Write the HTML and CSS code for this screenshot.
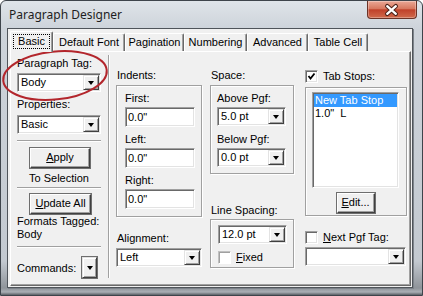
FILE: index.html
```html
<!DOCTYPE html>
<html lang="en">
  <head>
    <meta charset="UTF-8">
    <title>Paragraph Designer</title>
    <link rel="stylesheet" href="styles.css">
  </head>
  <body>
    <div class="window">
      <div class="titlebar">
        <span class="title">Paragraph Designer</span>
        <div class="close-btn">
          <svg width="50" height="18" viewBox="0 0 50 18">
            <path d="M20 5 L29 13 M29 5 L20 13" stroke="#4b2219" stroke-width="4.5" stroke-linecap="round"/>
            <path d="M20 5 L29 13 M29 5 L20 13" stroke="#fff" stroke-width="2.4" stroke-linecap="round"/>
          </svg>
        </div>
      </div>

      <div class="client">
        <div class="tabs">
          <div class="tab active tab-basic"><span class="focus">Basic</span></div>
          <div class="tab tab-font">Default Font</div>
          <div class="tab tab-pagination">Pagination</div>
          <div class="tab tab-numbering">Numbering</div>
          <div class="tab tab-advanced">Advanced</div>
          <div class="tab tab-cell">Table Cell</div>
        </div>

        <div class="panel">
          <!-- tag / properties / commands -->
          <div class="col-left">
            <div class="label">Paragraph Tag:</div>
            <div class="combo tag-combo"><span class="value">Body</span><span class="arrow"></span></div>
            <div class="label props-label">Properties:</div>
            <div class="combo props-combo"><span class="value">Basic</span><span class="arrow"></span></div>
            <div class="hsep sep-1"></div>
            <div class="button apply-btn"><u>A</u>pply</div>
            <div class="label center to-sel">To Selection</div>
            <div class="hsep sep-2"></div>
            <div class="button update-btn"><u>U</u>pdate All</div>
            <div class="label tight tagged">Formats Tagged:</div>
            <div class="label tight">Body</div>
            <div class="hsep sep-3"></div>
            <div class="commands">
              <span>Commands:</span>
              <span class="arrow-btn"></span>
            </div>
          </div>

          <div class="vsep"></div>

          <!-- indents + alignment -->
          <div class="col-indents">
            <div class="label caption">Indents:</div>
            <div class="group indents-box">
              <div class="label">First:</div>
              <div class="field">0.0"</div>
              <div class="label next">Left:</div>
              <div class="field">0.0"</div>
              <div class="label next">Right:</div>
              <div class="field">0.0"</div>
            </div>
            <div class="label caption align-label">Alignment:</div>
            <div class="combo align-combo"><span class="value">Left</span><span class="arrow"></span></div>
          </div>

          <!-- space + line spacing -->
          <div class="col-space">
            <div class="label caption">Space:</div>
            <div class="group space-box">
              <div class="label">Above Pgf:</div>
              <div class="combo"><span class="value">5.0 pt</span><span class="arrow"></span></div>
              <div class="label next-sel">Below Pgf:</div>
              <div class="combo"><span class="value">0.0 pt</span><span class="arrow"></span></div>
            </div>
            <div class="label caption linesp-label">Line Spacing:</div>
            <div class="group linesp-box">
              <div class="combo"><span class="value">12.0 pt</span><span class="arrow"></span></div>
              <div class="check-row fixed-row">
                <span class="checkbox"></span>
                <span><u>F</u>ixed</span>
              </div>
            </div>
          </div>

          <!-- tab stops + next tag -->
          <div class="col-tabs">
            <div class="check-row">
              <span class="checkbox">
                <svg width="9" height="9" viewBox="0 0 9 9"><polyline points="1.5,4 3.5,6.5 7.5,1.5" fill="none" stroke="#000" stroke-width="1.8"/></svg>
              </span>
              <span>Tab Stops:</span>
            </div>
            <div class="group tabs-box">
              <div class="listbox">
                <div class="item selected">New Tab Stop</div>
                <div class="item">1.0"&nbsp;&nbsp;L</div>
              </div>
              <div class="button edit-btn"><u>E</u>dit...</div>
            </div>
            <div class="check-row next-row">
              <span class="checkbox"></span>
              <span><u>N</u>ext Pgf Tag:</span>
            </div>
            <div class="combo next-combo"><span class="value"></span><span class="arrow"></span></div>
          </div>
        </div>
      </div>
    </div>

    <svg class="annotation" width="423" height="296" viewBox="0 0 423 296">
      <ellipse cx="55" cy="75.5" rx="52" ry="24" transform="rotate(-6 55 75.5)" fill="none" stroke="#b3262c" stroke-width="2"/>
    </svg>
  </body>
</html>
```

FILE: styles.css
```css
body {
  margin: 0;
  background: #fff;
  font-family: "Liberation Sans", Arial, sans-serif;
  font-size: 11px;
  color: #000;
}
.window {
  width: 423px;
  height: 296px;
  box-sizing: border-box;
  border: 1px solid #3e444b;
  border-radius: 6px 6px 0 0;
  background: linear-gradient(#dfe4e9, #cdd3da 28px, #c3c9d0 260px, #8f949a 287px, #a9aeb4 291px, #5b6066);
  display: flex;
  flex-direction: column;
}
.titlebar {
  height: 27px;
  display: flex;
  align-items: flex-start;
  padding-left: 8px;
}
.title {
  font-family: "Noto Sans", sans-serif;
  font-size: 12px;
  line-height: 28px;
  color: #1e1e1e;
}
.close-btn {
  margin-left: auto;
  margin-right: 5px;
  width: 50px;
  height: 18px;
  box-sizing: border-box;
  border: 1px solid #6b3327;
  border-top: none;
  border-radius: 0 0 4px 4px;
  background: linear-gradient(#eaa896, #d7785f 45%, #c0412a 52%, #d06a4c);
  box-shadow: inset 0 0 0 1px rgba(255, 255, 255, 0.3);
  display: flex;
  justify-content: center;
  align-items: center;
}
.close-btn svg {
  display: block;
}

.client {
  flex: 1;
  margin: 0 9px 7px 6px;
  border: 1px solid #4f545a;
  box-shadow: 1px 1px 0 #7d838a;
  background: #f0f0f0;
  padding: 2px 1px 1px 2px;
  display: flex;
  flex-direction: column;
}

/* tabs */
.tabs {
  height: 20px;
  display: flex;
  align-items: flex-end;
}
.tab {
  height: 18px;
  box-sizing: border-box;
  border: 1px solid #fff;
  border-right-color: #696969;
  border-bottom: none;
  border-radius: 2px 2px 0 0;
  box-shadow: inset -1px 0 #a0a0a0;
  text-align: center;
  line-height: 17px;
}
.tab.active {
  height: 21px;
  margin-bottom: -1px;
  background: #f0f0f0;
  position: relative;
  z-index: 1;
  line-height: 18px;
}
.focus {
  display: inline-block;
  outline: 1px dotted #000;
  padding: 0 4px;
  line-height: 13px;
  margin-top: 2px;
}
.tab-basic { width: 43px; }
.tab-font { width: 72px; }
.tab-pagination { width: 59px; }
.tab-numbering { width: 63px; }
.tab-advanced { width: 61px; }
.tab-cell { width: 60px; }

.panel {
  flex: 1;
  border: 1px solid #fff;
  border-right-color: #696969;
  border-bottom-color: #696969;
  box-shadow: inset -1px -1px #a0a0a0;
  padding: 4px 3px 7px 6px;
  display: flex;
}

/* common controls */
.label {
  line-height: 14px;
  white-space: nowrap;
}
.label.center {
  text-align: center;
}
.label.tight {
  line-height: 13px;
}
.combo,
.field {
  height: 19px;
  box-sizing: border-box;
  border: 1px solid;
  border-color: #a0a0a0 #fff #fff #a0a0a0;
  box-shadow: inset 1px 1px #696969, inset -1px -1px #e3e3e3;
  background: #fff;
}
.combo {
  display: flex;
  padding: 1px;
}
.combo .value {
  flex: 1;
  padding-left: 2px;
  line-height: 15px;
}
.field {
  height: 20px;
  padding-left: 2px;
  line-height: 18px;
}
.arrow,
.arrow-btn {
  width: 16px;
  box-sizing: border-box;
  border: 1px solid;
  border-color: #e3e3e3 #404040 #404040 #e3e3e3;
  box-shadow: inset 1px 1px #fff, inset -1px -1px #a0a0a0;
  background: #f0f0f0;
  display: flex;
  justify-content: center;
  align-items: center;
}
.arrow::after,
.arrow-btn::after {
  content: "";
  border-top: 4px solid #000;
  border-left: 3.5px solid transparent;
  border-right: 3.5px solid transparent;
}
.button {
  height: 20px;
  box-sizing: border-box;
  border: 1px solid;
  border-color: #fff #404040 #404040 #fff;
  box-shadow: inset -1px -1px #a0a0a0, 0 0 0 1px #6e6e6e;
  text-align: center;
  line-height: 17px;
}
.hsep {
  border-top: 1px solid #a0a0a0;
  border-bottom: 1px solid #fff;
}
.group {
  border: 1px solid #a0a0a0;
  box-shadow: inset 1px 1px #fff, 1px 1px #fff;
}
.checkbox {
  width: 13px;
  height: 13px;
  box-sizing: border-box;
  border: 1px solid;
  border-color: #a0a0a0 #fff #fff #a0a0a0;
  box-shadow: inset 1px 1px #696969, inset -1px -1px #e3e3e3;
  background: #fff;
  display: flex;
  justify-content: center;
  align-items: center;
}
.check-row {
  display: flex;
  align-items: center;
  gap: 5px;
  height: 14px;
}

/* left column */
.col-left {
  width: 84px;
  display: flex;
  flex-direction: column;
}
.tag-combo { margin-top: 3px; }
.props-label { margin-top: 5px; }
.props-combo { margin-top: 4px; }
.sep-1 { margin-top: 6px; }
.apply-btn {
  margin: 6px 11px 0 13px;
}
.to-sel { margin-top: 3px; }
.sep-2 { margin-top: 2px; }
.update-btn {
  margin: 5px 10px 0 13px;
}
.tagged { margin-top: 1px; }
.sep-3 { margin-top: 5px; }
.commands {
  margin-top: 9px;
  display: flex;
  align-items: center;
  justify-content: flex-end;
  gap: 6px;
  padding-right: 4px;
}
.arrow-btn {
  height: 21px;
  box-shadow: inset 1px 1px #fff, inset -1px -1px #a0a0a0, 0 0 0 1px #6e6e6e;
}

.vsep {
  margin: -1px 0 0 7px;
  border-left: 1px solid #a0a0a0;
  border-right: 1px solid #fff;
}

/* middle columns */
.col-indents {
  width: 86px;
  margin-left: 6px;
  padding-top: 12px;
  display: flex;
  flex-direction: column;
}
.col-space {
  width: 84px;
  margin-left: 8px;
  padding-top: 12px;
  display: flex;
  flex-direction: column;
}
.caption {
  padding-left: 1px;
}
.indents-box {
  margin-top: 3px;
  padding: 5px 6px 7px 8px;
}
.indents-box .field {
  margin-top: 2px;
}
.indents-box .next {
  margin-top: 5px;
}
.align-label { margin-top: 14px; }
.align-combo { margin-top: 3px; }
.space-box {
  margin-top: 3px;
  padding: 5px 7px 6px 6px;
}
.space-box .combo {
  margin-top: 2px;
}
.space-box .next-sel {
  margin-top: 6px;
}
.linesp-label { margin-top: 29px; }
.linesp-box {
  margin-top: 2px;
  padding: 5px 6px 3px 7px;
}
.fixed-row { margin-top: 6px; }
.fixed-row .checkbox {
  border-color: #c0c0c0 #fff #fff #c0c0c0;
  box-shadow: inset 1px 1px #a0a0a0;
}

/* tab stops column */
.col-tabs {
  width: 102px;
  margin-left: 11px;
  padding-top: 13px;
  display: flex;
  flex-direction: column;
}
.tabs-box {
  margin-top: 4px;
  padding: 4px 7px 2px 6px;
  display: flex;
  flex-direction: column;
  align-items: center;
}
.listbox {
  align-self: stretch;
  height: 96px;
  box-sizing: border-box;
  border: 1px solid;
  border-color: #a0a0a0 #fff #fff #a0a0a0;
  box-shadow: inset 1px 1px #696969, inset -1px -1px #e3e3e3;
  background: #fff;
  padding: 1px;
}
.item {
  line-height: 13px;
  padding-left: 1px;
  white-space: nowrap;
}
.item.selected {
  background: #3399ff;
  color: #fff;
}
.edit-btn {
  width: 38px;
  margin-top: 5px;
}
.next-row { margin-top: 14px; }
.next-combo {
  margin-top: 3px;
  width: 101px;
}

.annotation {
  position: absolute;
  top: 0;
  left: 0;
  pointer-events: none;
}
```
